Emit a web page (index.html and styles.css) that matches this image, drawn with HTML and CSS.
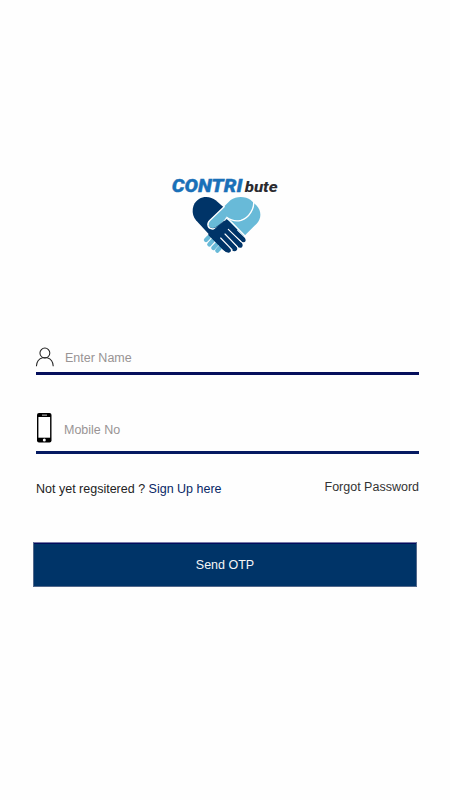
FILE: index.html
```html
<!DOCTYPE html>
<html lang="en">
<head>
<meta charset="utf-8">
<title>CONTRIbute</title>
<link rel="stylesheet" href="styles.css">
</head>
<body>
<main class="screen">
  <svg class="logo" viewBox="0 0 360 270" role="img" aria-label="CONTRIbute">
    <text class="brand" x="20" y="67" textLength="212" lengthAdjust="spacingAndGlyphs">CONTRI</text>
    <text class="brand-tail" x="239" y="66" textLength="99" lengthAdjust="spacingAndGlyphs">bute</text>
    <g transform="translate(69 66)">
      <path class="fingers" d="M54 144L62 136M64 157L74 146M76 168L86 157M88 176L95 168"/>
      <path class="navy" d="M24 85C8 66 11 34 33 21C50 11 71 15 83 25L107 46L150 110L115 180L104 172Z"/>
      <path class="sky" d="M128 24C146 11 174 13 188 24L205 40C222 58 220 80 206 95L168 133L116 80L84 105C70 112 58 104 60 95C60 89 68 82 77 74Z"/>
      <path class="gap" d="M110 43L66 85C54 97 60 110 74 111C84 111 91 106 97 99L113 82"/>
      <path class="gap" d="M197 25C200 49 184 77 159 85C142 90 127 84 115 75"/>
      <path class="gap" d="M112 79Q119 79 126 86L174 135"/>
      <path class="navy" d="M77 113L103 91Q111 81 121 90L170 137Q176 145 170 150Q164 152 158 146L135 126L162 154Q167 162 160 167Q154 169 147 163L122 139L146 164Q151 173 143 177Q137 179 131 173L108 151L128 172Q131 180 123 182Q115 183 106 174L60 128Z"/>
      <path class="crease" d="M121 112L159 149M111 126L148 164M98 138L132 173"/>
    </g>
  </svg>

  <form class="form">
    <label class="field field-name">
      <svg class="icon-user" viewBox="0 0 20 21"><circle cx="10.4" cy="6.3" r="5.2"/><path d="M1.5 20.2C1.7 15 4.4 12.2 7.9 11.2H12.9C16.4 12.2 19 15 19.2 20.2"/></svg>
      <input type="text" placeholder="Enter Name">
    </label>
    <label class="field field-mobile">
      <svg class="icon-phone" viewBox="0 0 15 30"><rect width="14.5" height="29.5" rx="2"/><path class="glass" d="M1.4 4H13.1V24.7H1.4Z"/><path class="glass" d="M5 1.7H10V2.5H5Z"/><circle class="glass" cx="7.3" cy="27" r="1.5"/></svg>
      <input type="tel" placeholder="Mobile No">
    </label>
    <div class="links">
      <p class="signup">Not yet regsitered ? <a>Sign Up here</a></p>
      <a class="forgot">Forgot Password</a>
    </div>
    <button class="submit" type="button">Send OTP</button>
  </form>
</main>
</body>
</html>
```

FILE: styles.css
```css
* { box-sizing: border-box; }
body {
  margin: 0;
  background: #fefefe;
  font-family: "Liberation Sans", Arial, sans-serif;
  font-size: 13px;
}
.screen {
  width: 450px;
  height: 800px;
  padding-top: 170px;
  overflow: hidden;
}
.logo {
  display: block;
  width: 120px;
  height: 90px;
  margin-left: 165px;
}
.brand, .brand-tail {
  font-family: Roboto, sans-serif;
  font-style: italic;
  font-weight: 900;
}
.brand { font-size: 57px; fill: #1a70b8; stroke: #1a70b8; stroke-width: 1; }
.brand-tail { font-size: 42px; font-weight: 800; fill: #2b2b30; }
.navy { fill: #003468; }
.sky { fill: #68bad8; }
.fingers { stroke: #68bad8; stroke-width: 13; stroke-linecap: round; }
.gap { fill: none; stroke: #fff; stroke-width: 4; }
.crease { stroke: #fff; stroke-width: 3.5; stroke-linecap: round; }
.form {
  width: 384px;
  margin: 80px 0 0 36px;
}
.field {
  display: flex;
  width: 383px;
  border-bottom: 3px solid #050f5c;
}
.field-name { height: 35px; margin-top: 80px; }
.field-mobile { height: 79px; padding-top: 37px; border-color: #051a62; }
.icon-user {
  width: 19px;
  height: 20px;
  margin: 7px 0 0 -1px;
  fill: none;
  stroke: #222;
  stroke-width: 1.1;
}
.icon-phone { width: 15px; height: 30px; margin: 1px 0 0 1px; fill: #000; }
.icon-phone .glass { fill: #fff; }
.field input {
  width: 300px;
  height: 18px;
  padding: 0;
  border: 0;
  outline: 0;
  background: transparent;
  font: 12.5px "Liberation Sans", Arial, sans-serif;
}
.field input::placeholder { color: #999494; opacity: 1; }
.field-name input { margin: 9px 0 0 11px; }
.field-mobile input { margin: 9px 0 0 12px; }
.links {
  display: flex;
  justify-content: space-between;
  width: 383px;
  height: 88px;
  padding-top: 25px;
  line-height: 16px;
}
.signup { margin: 2px 0 0; color: #222; font-size: 12.5px; }
.signup a { color: #082766; }
.forgot { color: #333; font-size: 12.5px; }
.submit {
  display: block;
  width: 384px;
  height: 45px;
  margin-left: -3px;
  padding: 0;
  border: 1px solid #52688b;
  border-top-color: #777ba8;
  box-shadow: inset 0 1px #030b5c;
  background: #003468;
  color: #f5f5f5;
  font: 12.5px "Liberation Sans", Arial, sans-serif;
}
```
